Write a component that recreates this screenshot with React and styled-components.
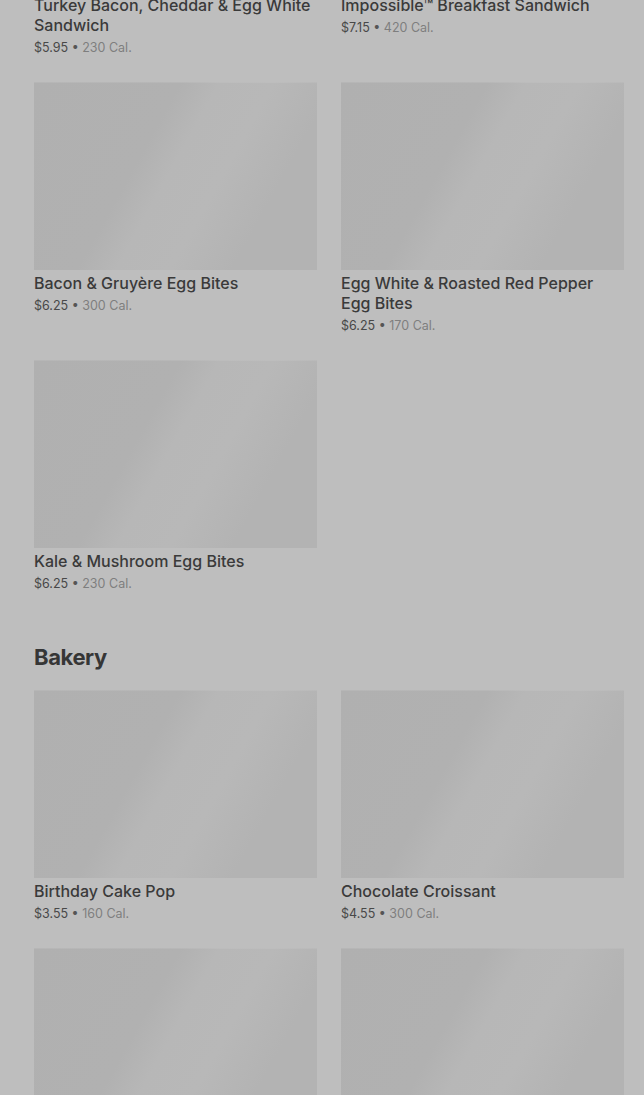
import React from 'react';
import styled, { createGlobalStyle } from 'styled-components';

const GlobalStyle = createGlobalStyle`
  html, body {
    margin: 0;
    padding: 0;
    background: #bebebe;
    overflow: hidden;
  }
  body {
    font-family: Inter, "Noto Sans", "Liberation Sans", sans-serif;
    -webkit-font-smoothing: antialiased;
  }
`;

// the list is scrolled: first row of cards sits mostly above the fold
const Page = styled.main`
  margin-top: -196px;
  padding: 0 20px 0 34px;
  height: 1291px;
  overflow: hidden;
`;

const Section = styled.section`
  & + & {
    margin-top: 47px;
  }
`;

const Heading = styled.h2`
  margin: 0 0 17px;
  font-size: 22px;
  line-height: 32px;
  font-weight: 700;
  letter-spacing: -0.4px;
  color: #363636;
`;

const Grid = styled.div`
  display: grid;
  grid-template-columns: 1fr 1fr;
  column-gap: 24px;
  row-gap: 24px;
  align-items: start;
`;

const Card = styled.article`
  display: flex;
  flex-direction: column;
`;

const Thumb = styled.div`
  height: 188px;
  background: linear-gradient(119deg, #b0b0b0 0%, #b1b1b1 38%, #b7b7b7 48%, #b8b8b8 62%, #b3b3b3 78%, #b3b3b3 100%);
  box-shadow: inset 0 1px 0 rgba(255, 255, 255, 0.08);
`;

const Title = styled.h3`
  margin: 3px 0 0;
  font-size: 16px;
  line-height: 20px;
  font-weight: 500;
  letter-spacing: 0;
  color: #3a3a3a;
`;

const Meta = styled.p`
  margin: 3px 0 0;
  font-size: 12.5px;
  line-height: 20px;
  color: #7e7e7e;
`;

const Price = styled.span`
  color: #484848;
`;

const Dot = styled.span`
  color: #555;
`;

const sections = [
  {
    name: null,
    items: [
      { title: 'Turkey Bacon, Cheddar & Egg White Sandwich', price: '$5.95', cal: 230 },
      { title: 'Impossible™ Breakfast Sandwich', price: '$7.15', cal: 420 },
      { title: 'Bacon & Gruyère Egg Bites', price: '$6.25', cal: 300 },
      { title: 'Egg White & Roasted Red Pepper Egg Bites', price: '$6.25', cal: 170 },
      { title: 'Kale & Mushroom Egg Bites', price: '$6.25', cal: 230 },
    ],
  },
  {
    name: 'Bakery',
    items: [
      { title: 'Birthday Cake Pop', price: '$3.55', cal: 160 },
      { title: 'Chocolate Croissant', price: '$4.55', cal: 300 },
      { title: 'Butter Croissant', price: '$3.75', cal: 260 },
      { title: 'Cheese Danish', price: '$3.95', cal: 290 },
    ],
  },
];

const Item = ({ title, price, cal }) => (
  <Card>
    <Thumb />
    <Title>{title}</Title>
    <Meta>
      <Price>{price}</Price> <Dot>•</Dot> {cal} Cal.
    </Meta>
  </Card>
);

const App = () => (
  <>
    <GlobalStyle />
    <Page>
      {sections.map(({ name, items }, i) => (
        <Section key={i}>
          {name && <Heading>{name}</Heading>}
          <Grid>
            {items.map(item => <Item key={item.title} {...item} />)}
          </Grid>
        </Section>
      ))}
    </Page>
  </>
);

export default App;
